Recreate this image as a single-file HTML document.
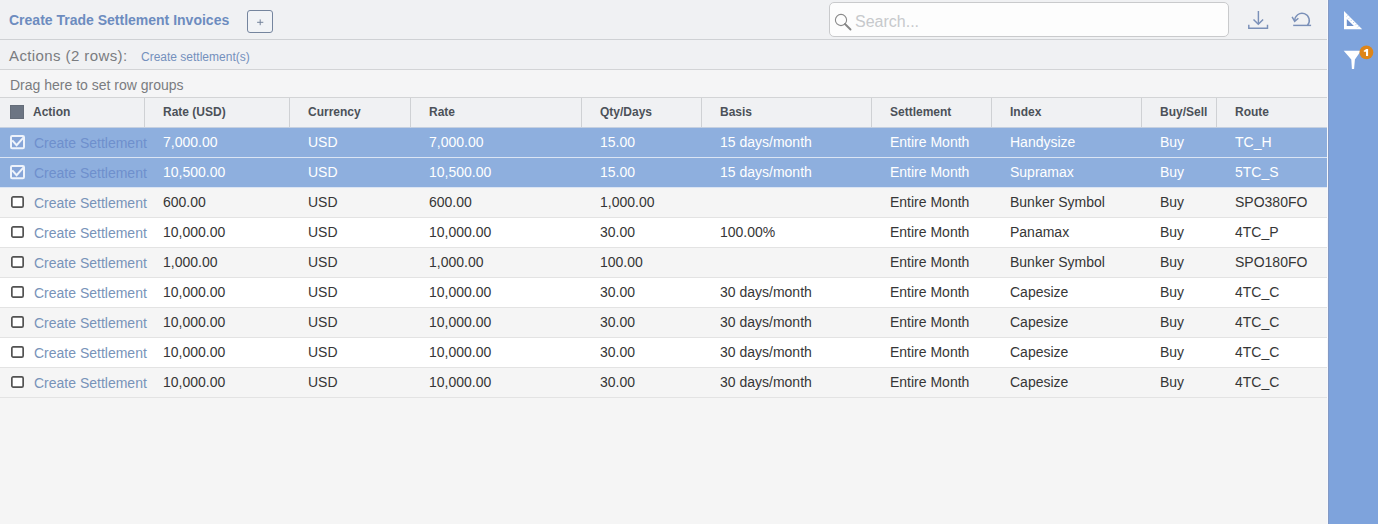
<!DOCTYPE html>
<html><head><meta charset="utf-8">
<style>
*{margin:0;padding:0;box-sizing:border-box}
html,body{width:1378px;height:524px;overflow:hidden;background:#f5f5f5;font-family:"Liberation Sans",sans-serif}
.abs{position:absolute}
#main{position:absolute;left:0;top:0;width:1328px;height:524px;background:#f5f5f5}
#toolbar{position:absolute;left:0;top:0;width:1328px;height:40px;background:#f0f1f3;border-bottom:1px solid #cfd1d4}
#title{position:absolute;left:9px;top:12px;font-size:14px;font-weight:bold;color:#6d8cbf;white-space:nowrap}
#plus{position:absolute;left:247px;top:10px;width:26px;height:23px;border:1px solid #75859e;border-radius:3px;background:#f1f3f6}
#search{position:absolute;left:829px;top:2px;width:400px;height:35px;background:#fdfdfd;border:1px solid #c9cacc;border-radius:5px}
#search span{position:absolute;left:25px;top:10px;font-size:16px;color:#c7c9cc}
#actions{position:absolute;left:0;top:40px;width:1328px;height:30px;background:#f0f1f3;border-bottom:1px solid #d3d4d6}
#actions .t{position:absolute;left:9px;top:7px;font-size:15px;letter-spacing:0.4px;color:#7a7c80;white-space:nowrap}
#actions .l{position:absolute;left:141px;top:10px;font-size:12px;color:#7490bd;white-space:nowrap}
#drag{position:absolute;left:0;top:70px;width:1328px;height:28px;background:#f5f5f6;border-bottom:1px solid #d3d4d6}
#drag span{position:absolute;left:10px;top:7px;font-size:14px;color:#7a7c80;white-space:nowrap}
#header{position:absolute;left:0;top:98px;width:1327px;height:30px;background:#f0f1f3;border-bottom:1px solid #c5d0e0}
.hc{position:absolute;top:0;height:29px;border-right:1px solid #cfd1d4}
.hc span{position:absolute;left:18px;top:7px;font-size:12px;font-weight:bold;color:#4c5159;white-space:nowrap}
.row{position:absolute;left:0;width:1327px;height:30px;border-bottom:1px solid #e3e3e3}
.row.odd{background:#f5f5f5}
.row.even{background:#ffffff}
.row.sel{background:#8eafde;border-bottom:1px solid #dbe5f4}
.c{position:absolute;top:6px;font-size:14px;color:#363636;white-space:nowrap}
.sel .c{color:#ffffff}
.lnk{color:#7893b9 !important;top:7px}
.sel .lnk{color:#6e90cd !important}
.cb{position:absolute;left:11px;top:8px;width:13px;height:12px;border:2px solid #5c5c5c;border-radius:2px;background:#fff}
#side{position:absolute;left:1328px;top:0;width:50px;height:524px;background:#7ea3dc;border-left:1px solid #8399c4}
</style></head><body>
<div id="main">
  <div id="toolbar">
    <div id="title">Create Trade Settlement Invoices</div>
    <div id="plus"><svg class="abs" style="left:0;top:0" width="24" height="21" viewBox="0 0 24 21"><path d="M9.1,11.3 H15.3 M12.2,8.4 V14.2" stroke="#74839b" stroke-width="1" fill="none"/></svg></div>
    <div id="search">
      <svg class="abs" style="left:4px;top:10px" width="20" height="20" viewBox="0 0 20 20"><circle cx="7" cy="7" r="5.6" fill="none" stroke="#8a8a8a" stroke-width="1.1"/><line x1="11" y1="11" x2="16.5" y2="16.5" stroke="#868686" stroke-width="1.9" stroke-linecap="round"/></svg>
      <span>Search...</span>
    </div>
    <svg class="abs" style="left:1240px;top:0" width="80" height="40" viewBox="0 0 80 40">
      <g fill="none" stroke="#7a90b8" stroke-width="1.45">
        <line x1="18.4" y1="11" x2="18.4" y2="24"/>
        <polyline points="13.5,19.4 18.3,24.2 23.1,19.4"/>
        <polyline points="8.8,24.8 8.8,28.3 27.5,28.3 27.5,24.8"/>
        <path d="M53.2,25.4 L71.1,25.4"/>
        <path d="M54.8,21 A7.25,7.25 0 1 1 67.4,25.4"/>
        <polyline points="52.1,16.9 54.7,21.4 58.4,18.3"/>
      </g>
    </svg>
  </div>
  <div id="actions"><span class="t">Actions (2 rows):</span><span class="l">Create settlement(s)</span></div>
  <div id="drag"><span>Drag here to set row groups</span></div>
  <div id="header">
    <div class="hc" style="left:0;width:145px"><div class="abs" style="left:10px;top:7px;width:14px;height:14px;background:#6c7583;border:1px solid #656d79"></div><span style="left:33px">Action</span></div>
    <div class="hc" style="left:145px;width:145px"><span>Rate (USD)</span></div>
    <div class="hc" style="left:290px;width:121px"><span>Currency</span></div>
    <div class="hc" style="left:411px;width:171px"><span>Rate</span></div>
    <div class="hc" style="left:582px;width:120px"><span>Qty/Days</span></div>
    <div class="hc" style="left:702px;width:170px"><span>Basis</span></div>
    <div class="hc" style="left:872px;width:120px"><span>Settlement</span></div>
    <div class="hc" style="left:992px;width:150px"><span>Index</span></div>
    <div class="hc" style="left:1142px;width:75px"><span>Buy/Sell</span></div>
    <div class="hc" style="left:1217px;width:110px;border-right:none"><span>Route</span></div>
  </div>
  <div id="rows">
<div class="row sel" style="top:128px"><svg class="abs" style="left:10px;top:7px" width="15" height="15" viewBox="0 0 15 15"><rect x="1" y="1" width="13" height="12.3" rx="1.2" fill="#86a5d8" stroke="#eef3fb" stroke-width="2"/><polyline points="2.2,5.4 6.6,10.2 13.4,2.6" fill="none" stroke="#eef3fb" stroke-width="2.1"/></svg><span class="c lnk" style="left:34px">Create Settlement</span><span class="c" style="left:163px">7,000.00</span><span class="c" style="left:308px">USD</span><span class="c" style="left:429px">7,000.00</span><span class="c" style="left:600px">15.00</span><span class="c" style="left:720px">15 days/month</span><span class="c" style="left:890px">Entire Month</span><span class="c" style="left:1010px">Handysize</span><span class="c" style="left:1160px">Buy</span><span class="c" style="left:1235px">TC_H</span></div>
<div class="row sel" style="top:158px"><svg class="abs" style="left:10px;top:7px" width="15" height="15" viewBox="0 0 15 15"><rect x="1" y="1" width="13" height="12.3" rx="1.2" fill="#86a5d8" stroke="#eef3fb" stroke-width="2"/><polyline points="2.2,5.4 6.6,10.2 13.4,2.6" fill="none" stroke="#eef3fb" stroke-width="2.1"/></svg><span class="c lnk" style="left:34px">Create Settlement</span><span class="c" style="left:163px">10,500.00</span><span class="c" style="left:308px">USD</span><span class="c" style="left:429px">10,500.00</span><span class="c" style="left:600px">15.00</span><span class="c" style="left:720px">15 days/month</span><span class="c" style="left:890px">Entire Month</span><span class="c" style="left:1010px">Supramax</span><span class="c" style="left:1160px">Buy</span><span class="c" style="left:1235px">5TC_S</span></div>
<div class="row odd" style="top:188px"><svg class="abs" style="left:11px;top:8px" width="13" height="12" viewBox="0 0 13 12"><rect x="0.85" y="0.85" width="11.3" height="10.3" rx="1.4" fill="#fff" stroke="#525252" stroke-width="1.7"/></svg><span class="c lnk" style="left:34px">Create Settlement</span><span class="c" style="left:163px">600.00</span><span class="c" style="left:308px">USD</span><span class="c" style="left:429px">600.00</span><span class="c" style="left:600px">1,000.00</span><span class="c" style="left:890px">Entire Month</span><span class="c" style="left:1010px">Bunker Symbol</span><span class="c" style="left:1160px">Buy</span><span class="c" style="left:1235px">SPO380FO</span></div>
<div class="row even" style="top:218px"><svg class="abs" style="left:11px;top:8px" width="13" height="12" viewBox="0 0 13 12"><rect x="0.85" y="0.85" width="11.3" height="10.3" rx="1.4" fill="#fff" stroke="#525252" stroke-width="1.7"/></svg><span class="c lnk" style="left:34px">Create Settlement</span><span class="c" style="left:163px">10,000.00</span><span class="c" style="left:308px">USD</span><span class="c" style="left:429px">10,000.00</span><span class="c" style="left:600px">30.00</span><span class="c" style="left:720px">100.00%</span><span class="c" style="left:890px">Entire Month</span><span class="c" style="left:1010px">Panamax</span><span class="c" style="left:1160px">Buy</span><span class="c" style="left:1235px">4TC_P</span></div>
<div class="row odd" style="top:248px"><svg class="abs" style="left:11px;top:8px" width="13" height="12" viewBox="0 0 13 12"><rect x="0.85" y="0.85" width="11.3" height="10.3" rx="1.4" fill="#fff" stroke="#525252" stroke-width="1.7"/></svg><span class="c lnk" style="left:34px">Create Settlement</span><span class="c" style="left:163px">1,000.00</span><span class="c" style="left:308px">USD</span><span class="c" style="left:429px">1,000.00</span><span class="c" style="left:600px">100.00</span><span class="c" style="left:890px">Entire Month</span><span class="c" style="left:1010px">Bunker Symbol</span><span class="c" style="left:1160px">Buy</span><span class="c" style="left:1235px">SPO180FO</span></div>
<div class="row even" style="top:278px"><svg class="abs" style="left:11px;top:8px" width="13" height="12" viewBox="0 0 13 12"><rect x="0.85" y="0.85" width="11.3" height="10.3" rx="1.4" fill="#fff" stroke="#525252" stroke-width="1.7"/></svg><span class="c lnk" style="left:34px">Create Settlement</span><span class="c" style="left:163px">10,000.00</span><span class="c" style="left:308px">USD</span><span class="c" style="left:429px">10,000.00</span><span class="c" style="left:600px">30.00</span><span class="c" style="left:720px">30 days/month</span><span class="c" style="left:890px">Entire Month</span><span class="c" style="left:1010px">Capesize</span><span class="c" style="left:1160px">Buy</span><span class="c" style="left:1235px">4TC_C</span></div>
<div class="row odd" style="top:308px"><svg class="abs" style="left:11px;top:8px" width="13" height="12" viewBox="0 0 13 12"><rect x="0.85" y="0.85" width="11.3" height="10.3" rx="1.4" fill="#fff" stroke="#525252" stroke-width="1.7"/></svg><span class="c lnk" style="left:34px">Create Settlement</span><span class="c" style="left:163px">10,000.00</span><span class="c" style="left:308px">USD</span><span class="c" style="left:429px">10,000.00</span><span class="c" style="left:600px">30.00</span><span class="c" style="left:720px">30 days/month</span><span class="c" style="left:890px">Entire Month</span><span class="c" style="left:1010px">Capesize</span><span class="c" style="left:1160px">Buy</span><span class="c" style="left:1235px">4TC_C</span></div>
<div class="row even" style="top:338px"><svg class="abs" style="left:11px;top:8px" width="13" height="12" viewBox="0 0 13 12"><rect x="0.85" y="0.85" width="11.3" height="10.3" rx="1.4" fill="#fff" stroke="#525252" stroke-width="1.7"/></svg><span class="c lnk" style="left:34px">Create Settlement</span><span class="c" style="left:163px">10,000.00</span><span class="c" style="left:308px">USD</span><span class="c" style="left:429px">10,000.00</span><span class="c" style="left:600px">30.00</span><span class="c" style="left:720px">30 days/month</span><span class="c" style="left:890px">Entire Month</span><span class="c" style="left:1010px">Capesize</span><span class="c" style="left:1160px">Buy</span><span class="c" style="left:1235px">4TC_C</span></div>
<div class="row odd" style="top:368px"><svg class="abs" style="left:11px;top:8px" width="13" height="12" viewBox="0 0 13 12"><rect x="0.85" y="0.85" width="11.3" height="10.3" rx="1.4" fill="#fff" stroke="#525252" stroke-width="1.7"/></svg><span class="c lnk" style="left:34px">Create Settlement</span><span class="c" style="left:163px">10,000.00</span><span class="c" style="left:308px">USD</span><span class="c" style="left:429px">10,000.00</span><span class="c" style="left:600px">30.00</span><span class="c" style="left:720px">30 days/month</span><span class="c" style="left:890px">Entire Month</span><span class="c" style="left:1010px">Capesize</span><span class="c" style="left:1160px">Buy</span><span class="c" style="left:1235px">4TC_C</span></div>
</div>
</div>
<div class="abs" style="left:1327px;top:0;width:1px;height:524px;background:#f6f8fc"></div>
<div id="side">
  <svg class="abs" style="left:-1px;top:0" width="50" height="80" viewBox="1328 0 50 80">
    <path d="M1344,11 L1344,29.2 L1362.2,29.2 Z M1346.9,19.3 L1346.9,26.1 L1353.7,26.1 Z" fill="#ffffff" fill-rule="evenodd"/>
    <path d="M1346.9,19.3 L1346.9,26.1 L1353.7,26.1 Z" fill="#7193cc"/>
    <line x1="1347.51" y1="15.50" x2="1346.59" y2="16.42" stroke="#9fbbe6" stroke-width="0.9"/>
    <line x1="1349.69" y1="17.68" x2="1348.77" y2="18.60" stroke="#9fbbe6" stroke-width="0.9"/>
    <line x1="1351.88" y1="19.87" x2="1350.96" y2="20.79" stroke="#9fbbe6" stroke-width="0.9"/>
    <line x1="1354.06" y1="22.05" x2="1353.14" y2="22.97" stroke="#9fbbe6" stroke-width="0.9"/>
    <line x1="1356.25" y1="24.23" x2="1355.33" y2="25.15" stroke="#9fbbe6" stroke-width="0.9"/>
    <line x1="1358.43" y1="26.42" x2="1357.51" y2="27.34" stroke="#9fbbe6" stroke-width="0.9"/>
    <path d="M1343.7,50.8 L1361,50.8 L1354.9,59.6 L1354.1,69 L1351.9,69 L1351.3,59.6 Z" fill="#ffffff"/>
    <circle cx="1366.4" cy="52.4" r="6.9" fill="#de8519"/>
    <path d="M1365.9,49.0 L1368.1,49.0 L1368.1,55.9 L1366.0,55.9 L1366.0,51.7 L1363.8,51.7 L1363.8,50.4 Q1365.4,50.3 1365.9,49.0 Z" fill="#ffffff"/>
  </svg>
</div>
</body></html>
